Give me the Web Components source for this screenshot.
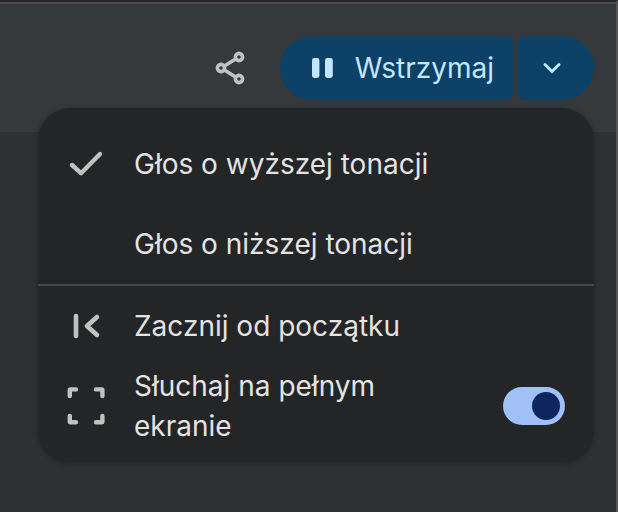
<!DOCTYPE html>
<html lang="pl">
<head>
<meta charset="utf-8">
<meta name="viewport" content="width=device-width, initial-scale=1">
<title>Odsłuchiwanie</title>
<style>
  html { height: 100%; }
  body {
    margin: 0; min-height: 100%; box-sizing: border-box; display: flex; flex-direction: column;
    background: #2e3234; color: #e3e3e3;
    border-top: 2px solid #2a2726; border-right: 2px solid #575654;
    font: 400 28px/40px "Inter", "Noto Sans", sans-serif;
    --accent: #0d4168; --on-accent: #c2e7ff; --surface: #242527; --icon: #c0c2c1;
  }
</style>
</head>
<body>
<player-toolbar>
  <icon-button label="Udostępnij"><ui-icon name="share"></ui-icon></icon-button>
  <split-button menu-label="Opcje odtwarzania"><ui-icon slot="icon" name="pause"></ui-icon>Wstrzymaj</split-button>
  <options-menu slot="menu">
    <menu-choice checked>Głos o wyższej tonacji</menu-choice>
    <menu-choice>Głos o niższej tonacji</menu-choice>
    <menu-divider></menu-divider>
    <menu-action icon="restart">Zacznij od początku</menu-action>
    <menu-switch icon="fullscreen" checked>Słuchaj na pełnym ekranie</menu-switch>
  </options-menu>
</player-toolbar>
<script>
const define = (name, markup) => {
  customElements.define(name, class extends HTMLElement {
    constructor() {
      super();
      this.attachShadow({ mode: "open" });
    }
    connectedCallback() {
      this.shadowRoot.innerHTML = typeof markup === "function" ? markup(this) : markup;
    }
  });
};

const icons = {
  share: `<svg width="40" height="40" viewBox="0 0 40 40"><g fill="none" stroke="currentColor" stroke-width="3.6"><path d="M14 18.2 26 10.8M14 21.8 26 29.2"/><circle cx="11" cy="20" r="3.6"/><circle cx="29" cy="9" r="3.6"/><circle cx="29" cy="31" r="3.6"/></g></svg>`,
  pause: `<svg width="40" height="40" viewBox="0 0 40 40"><g fill="currentColor"><rect x="10" y="10" width="7.4" height="20" rx="2.4"/><rect x="23" y="10" width="7.8" height="20" rx="2.4"/></g></svg>`,
  down: `<svg width="40" height="40" viewBox="0 0 40 40"><path d="M13 16.5 20 23.5 27 16.5" fill="none" stroke="currentColor" stroke-width="3" stroke-linecap="round"/></svg>`,
  check: `<svg width="40" height="40" viewBox="0 0 40 40"><path d="M6 21 15 29.2 34 10" fill="none" stroke="currentColor" stroke-width="4.4" stroke-linecap="round" stroke-linejoin="round"/></svg>`,
  restart: `<svg width="40" height="40" viewBox="0 0 40 40"><path d="M10 10V30M31 11 21 20 31 29" fill="none" stroke="currentColor" stroke-width="4.6" stroke-linecap="round" stroke-linejoin="round"/></svg>`,
  fullscreen: `<svg width="40" height="40" viewBox="0 0 40 40"><path d="M3.8 10V4Q3.8 3.4 4.4 3.4H10M30 3.4H35.6Q36.4 3.4 36.4 4V10M3.8 30V35.4Q3.8 36.2 4.4 36.2H10M30 36.2H35.6Q36.4 36.2 36.4 35.4V30" fill="none" stroke="currentColor" stroke-width="4.4" stroke-linecap="round" stroke-linejoin="round"/></svg>`
};

const rowStyle = `
  :host { display: block; }
  .row {
    display: flex; align-items: center; box-sizing: border-box; width: 100%; min-height: 80px;
    margin: 0; padding: 0 29px 0 28px; gap: 28px; border: 0; background: none;
    color: inherit; font: inherit; text-align: left; cursor: pointer;
  }
  .lead { flex: none; width: 40px; height: 40px; color: var(--icon); }
  .text { flex: 1; }
`;

define("ui-icon", host => `
  <style>:host { display: block; width: 40px; height: 40px; } svg { display: block; }</style>
  ${icons[host.getAttribute("name")] || ""}`);

define("icon-button", host => `
  <style>
    :host { display: block; }
    button { display: block; margin: 0; padding: 12px; border: 0; border-radius: 50%; background: none; color: var(--icon); cursor: pointer; }
  </style>
  <button aria-label="${host.getAttribute("label")}"><slot></slot></button>`);

define("split-button", host => `
  <style>
    :host { display: flex; gap: 4px; }
    button { display: flex; align-items: center; height: 64px; margin: 0; border: 0; background: var(--accent); color: var(--on-accent); font: inherit; cursor: pointer; }
    .main { gap: 13px; padding: 0 20px 0 22px; border-radius: 32px 8px 8px 32px; }
    .more { padding: 0 24px 0 14px; width: 76px; border-radius: 8px 32px 32px 8px; }
  </style>
  <button class="main"><slot name="icon"></slot><span><slot></slot></span></button>
  <button class="more" aria-label="${host.getAttribute("menu-label")}" aria-haspopup="menu" aria-expanded="true"><ui-icon name="down"></ui-icon></button>`);

define("player-toolbar", `
  <style>
    :host { display: block; position: relative; border-top: 2px solid #4d4d4d; background: #35393b; }
    .bar { display: flex; justify-content: flex-end; align-items: center; gap: 18px; padding: 32px 22px; }
    ::slotted([slot="menu"]) { position: absolute; top: 104px; left: 38px; right: 22px; }
  </style>
  <div class="bar"><slot></slot></div>
  <slot name="menu"></slot>`);

define("options-menu", `
  <style>
    :host { display: block; border-radius: 32px; background: var(--surface); box-shadow: 0 2px 6px rgba(0, 0, 0, .3); }
    div { padding: 16px 0; }
  </style>
  <div role="menu"><slot></slot></div>`);

define("menu-divider", `
  <style>:host { display: block; height: 2px; background: #444746; }</style>`);

define("menu-choice", host => `
  <style>${rowStyle}</style>
  <button class="row" role="menuitemradio" aria-checked="${host.hasAttribute("checked")}">
    <span class="lead">${host.hasAttribute("checked") ? '<ui-icon name="check"></ui-icon>' : ""}</span>
    <span class="text"><slot></slot></span>
  </button>`);

define("menu-action", host => `
  <style>${rowStyle}</style>
  <button class="row" role="menuitem">
    <span class="lead"><ui-icon name="${host.getAttribute("icon")}"></ui-icon></span>
    <span class="text"><slot></slot></span>
  </button>`);

define("menu-switch", host => `
  <style>
    ${rowStyle}
    .text { max-width: 280px; }
    input {
      appearance: none; flex: none; display: flex; align-items: center; box-sizing: border-box;
      width: 62px; height: 38px; margin: 0 0 0 auto; padding: 0 5px; border-radius: 19px; background: #5f6368; cursor: pointer;
    }
    input::before { content: ""; width: 28px; height: 28px; border-radius: 50%; background: #0d265f; }
    input:checked { background: #a1c0f8; justify-content: flex-end; }
  </style>
  <label class="row" for="toggle">
    <span class="lead"><ui-icon name="${host.getAttribute("icon")}"></ui-icon></span>
    <span class="text"><slot></slot></span>
    <input id="toggle" type="checkbox" role="switch" ${host.hasAttribute("checked") ? "checked" : ""}>
  </label>`);
</script>
</body>
</html>
